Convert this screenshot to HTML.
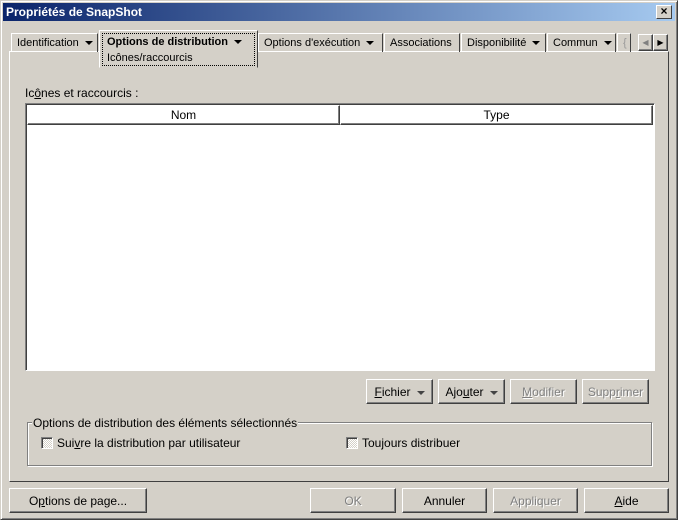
<!DOCTYPE html><html><head><style>
*{margin:0;padding:0;box-sizing:border-box}
body{width:678px;height:520px;background:#d4d0c8;font-family:"Liberation Sans",sans-serif;font-size:12px;color:#000;position:relative;overflow:hidden}
.a{position:absolute}
.win{left:0;top:0;width:678px;height:520px;border:1px solid;border-color:#d4d0c8 #404040 #404040 #d4d0c8;box-shadow:inset 1px 1px #fff,inset -1px -1px #808080}
.title{left:3px;top:3px;width:672px;height:18px;background:linear-gradient(90deg,#0a246a,#a6caf0);color:#fff;font-weight:bold;font-size:12px;line-height:18px;padding-left:3px}
.close{left:656px;top:5px;width:16px;height:14px;background:#d4d0c8;border:1px solid;border-color:#fff #404040 #404040 #fff;font-size:12px;font-weight:bold;line-height:11px;text-align:center;color:#000}
.tab{top:33px;height:19px;border:1px solid;border-color:#fff #404040 transparent #fff;border-bottom:none;line-height:18px;padding-left:5px;white-space:nowrap;overflow:hidden;font-size:11px}
.ar{display:inline-block;width:0;height:0;border-left:4px solid transparent;border-right:4px solid transparent;border-top:4px solid #000;vertical-align:middle;margin-left:6px}
.panel{left:9px;top:51px;width:660px;height:431px;border:1px solid;border-color:#fff #404040 #404040 #fff}
.btn{height:25px;border:1px solid;border-color:#fff #404040 #404040 #fff;box-shadow:inset -1px -1px #808080;text-align:center;line-height:24px;white-space:nowrap}
.dis{color:#808080;text-shadow:1px 1px #fff}
.cb{width:12px;height:12px;border:1px solid;border-color:#808080 #fff #fff #808080;box-shadow:inset 1px 1px #404040;background:repeating-conic-gradient(#fff 0 25%,#d4d0c8 0 50%) 0 0/2px 2px}
u{text-decoration:underline}
</style></head><body>
<div class="a win"></div>
<div class="a title">Propriétés de SnapShot</div>
<div class="a close">×</div>
<div class="a panel"></div>
<div class="a tab" style="left:11px;width:87px">Identification<span class="ar"></span></div>
<div class="a tab" style="left:258px;width:125px">Options d'exécution<span class="ar"></span></div>
<div class="a tab" style="left:384px;width:76px">Associations</div>
<div class="a tab" style="left:461px;width:85px">Disponibilité<span class="ar"></span></div>
<div class="a tab" style="left:547px;width:69px">Commun<span class="ar"></span></div>
<div class="a tab" style="left:617px;width:14px;color:#999">{</div>
<div class="a" style="left:99px;top:30px;width:159px;height:38px;background:#d4d0c8;border:1px solid;border-color:#fff #404040 transparent #fff"></div>
<div class="a" style="left:102px;top:33px;width:153px;height:33px;border:1px dotted #000;padding-left:4px;line-height:16px;white-space:nowrap;overflow:hidden;font-size:11px"><b>Options de distribution</b><span class="ar"></span><br>Icônes/raccourcis</div>
<div class="a btn" style="left:638px;top:34px;width:15px;height:17px;line-height:15px;font-size:8px;color:#808080">◀</div>
<div class="a btn" style="left:653px;top:34px;width:15px;height:17px;line-height:15px;font-size:8px">▶</div>
<div class="a" style="left:25px;top:86px">Ic<u>ô</u>nes et raccourcis :</div>
<div class="a" style="left:25px;top:103px;width:630px;height:268px;background:#fff;border:1px solid;border-color:#808080 #fff #fff #808080;box-shadow:inset 1px 1px #404040"></div>
<div class="a btn" style="left:27px;top:105px;width:313px;height:20px;line-height:19px">Nom</div>
<div class="a btn" style="left:340px;top:105px;width:313px;height:20px;line-height:19px">Type</div>
<div class="a btn" style="left:366px;top:379px;width:67px"><u>F</u>ichier<span class="ar" style="border-top-color:#444"></span></div>
<div class="a btn" style="left:438px;top:379px;width:67px">Ajo<u>u</u>ter<span class="ar" style="border-top-color:#444"></span></div>
<div class="a btn dis" style="left:510px;top:379px;width:67px"><u>M</u>odifier</div>
<div class="a btn dis" style="left:582px;top:379px;width:67px">Supp<u>r</u>imer</div>
<div class="a" style="left:27px;top:422px;width:625px;height:44px;border:1px solid #808080;box-shadow:1px 1px #fff,inset 1px 1px #fff"></div>
<div class="a" style="left:32px;top:416px;background:#d4d0c8;padding:0 1px">Options de distribution des éléments sélectionnés</div>
<div class="a cb" style="left:41px;top:437px"></div>
<div class="a" style="left:57px;top:436px">Sui<u>v</u>re la distribution par utilisateur</div>
<div class="a cb" style="left:346px;top:437px"></div>
<div class="a" style="left:362px;top:436px">Tou<u>j</u>ours distribuer</div>
<div class="a btn" style="left:9px;top:488px;width:138px">O<u>p</u>tions de page...</div>
<div class="a btn dis" style="left:310px;top:488px;width:86px">OK</div>
<div class="a btn" style="left:402px;top:488px;width:85px">Annuler</div>
<div class="a btn dis" style="left:493px;top:488px;width:85px">Appliquer</div>
<div class="a btn" style="left:584px;top:488px;width:85px"><u>A</u>ide</div>
</body></html>
